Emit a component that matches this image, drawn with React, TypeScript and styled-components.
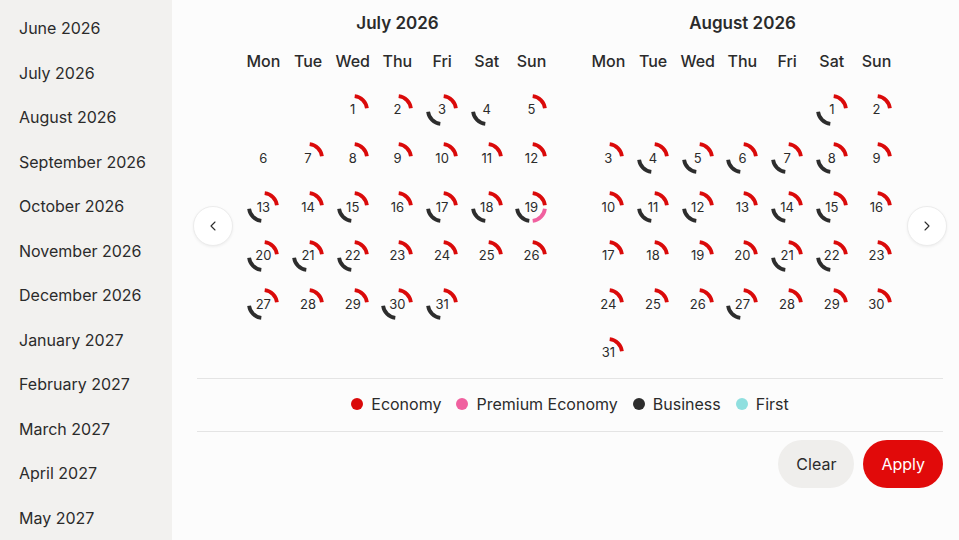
import styled, { createGlobalStyle } from "styled-components";
import { ChevronLeft, ChevronRight } from "lucide-react";

type Cabin = "economy" | "premium" | "business" | "first";

const CABIN_COLORS: Record<Cabin, string> = {
  economy: "#da0a0a",
  premium: "#f0609f",
  business: "#2d2d2d",
  first: "#8fdfdf",
};

// quadrant each cabin sits in, clockwise from 12 o'clock
const QUADRANT: Record<Cabin, number> = {
  economy: 0,
  premium: 1,
  business: 2,
  first: 3,
};

const MONTH_LIST = [
  "June 2026",
  "July 2026",
  "August 2026",
  "September 2026",
  "October 2026",
  "November 2026",
  "December 2026",
  "January 2027",
  "February 2027",
  "March 2027",
  "April 2027",
  "May 2027",
];

const WEEKDAYS = ["Mon", "Tue", "Wed", "Thu", "Fri", "Sat", "Sun"];

type MonthData = {
  title: string;
  offset: number; // blank cells before the 1st
  days: number;
  cabins: Record<number, Cabin[]>;
};

const E: Cabin[] = ["economy"];
const EB: Cabin[] = ["economy", "business"];

function fill(days: number, base: Cabin[], overrides: Record<number, Cabin[]>) {
  const out: Record<number, Cabin[]> = {};
  for (let d = 1; d <= days; d++) out[d] = overrides[d] ?? base;
  return out;
}

const MONTHS: MonthData[] = [
  {
    title: "July 2026",
    offset: 2,
    days: 31,
    cabins: fill(31, E, {
      3: EB,
      4: ["business"],
      6: [],
      13: EB,
      15: EB,
      17: EB,
      18: EB,
      19: ["economy", "premium", "business"],
      20: EB,
      21: EB,
      22: EB,
      27: EB,
      30: EB,
      31: EB,
    }),
  },
  {
    title: "August 2026",
    offset: 5,
    days: 31,
    cabins: fill(31, E, {
      1: EB,
      4: EB,
      5: EB,
      6: EB,
      7: EB,
      8: EB,
      11: EB,
      12: EB,
      14: EB,
      15: EB,
      21: EB,
      22: EB,
      27: EB,
    }),
  },
];

const R = 14;
const C = 17;

function arcPath(q: number) {
  const a0 = ((q * 90 + 7) * Math.PI) / 180;
  const a1 = ((q * 90 + 83) * Math.PI) / 180;
  const x0 = C + R * Math.sin(a0);
  const y0 = C - R * Math.cos(a0);
  const x1 = C + R * Math.sin(a1);
  const y1 = C - R * Math.cos(a1);
  return `M ${x0.toFixed(2)} ${y0.toFixed(2)} A ${R} ${R} 0 0 1 ${x1.toFixed(2)} ${y1.toFixed(2)}`;
}

function Ring({ cabins }: { cabins: Cabin[] }) {
  return (
    <RingSvg width={34} height={34} viewBox="0 0 34 34">
      {cabins.map((c) => (
        <path
          key={c}
          d={arcPath(QUADRANT[c])}
          fill="none"
          stroke={CABIN_COLORS[c]}
          strokeWidth={3.8}
        />
      ))}
    </RingSvg>
  );
}

function Month({ month }: { month: MonthData }) {
  const blanks = Array.from({ length: month.offset });
  const days = Array.from({ length: month.days }, (_, i) => i + 1);
  return (
    <MonthBox>
      <MonthTitle>{month.title}</MonthTitle>
      <Grid>
        {WEEKDAYS.map((w) => (
          <Weekday key={w}>{w}</Weekday>
        ))}
        {blanks.map((_, i) => (
          <Cell key={"b" + i} />
        ))}
        {days.map((d) => (
          <Cell key={d}>
            <Ring cabins={month.cabins[d]} />
            <DayNum>{d}</DayNum>
          </Cell>
        ))}
      </Grid>
    </MonthBox>
  );
}

export default function App() {
  return (
    <>
      <GlobalStyle />
      <Page>
        <Sidebar>
          {MONTH_LIST.map((m) => (
            <SideItem key={m}>{m}</SideItem>
          ))}
        </Sidebar>
        <Main>
          <CalendarRow>
            <NavButton aria-label="Previous month">
              <ChevronLeft size={16} strokeWidth={1.6} />
            </NavButton>
            <Months>
              {MONTHS.map((m) => (
                <Month key={m.title} month={m} />
              ))}
            </Months>
            <NavButton aria-label="Next month">
              <ChevronRight size={16} strokeWidth={1.6} />
            </NavButton>
          </CalendarRow>
          <Divider />
          <Legend>
            <LegendItem>
              <Dot $color={CABIN_COLORS.economy} />
              Economy
            </LegendItem>
            <LegendItem>
              <Dot $color={CABIN_COLORS.premium} />
              Premium Economy
            </LegendItem>
            <LegendItem>
              <Dot $color={CABIN_COLORS.business} />
              Business
            </LegendItem>
            <LegendItem>
              <Dot $color={CABIN_COLORS.first} />
              First
            </LegendItem>
          </Legend>
          <Divider />
          <Actions>
            <Button>Clear</Button>
            <Button $primary>Apply</Button>
          </Actions>
        </Main>
      </Page>
    </>
  );
}

const GlobalStyle = createGlobalStyle`
  body {
    margin: 0;
    font-family: Inter, "Liberation Sans", sans-serif;
    color: #2b2b2b;
    background: #fcfcfc;
  }
`;

const Page = styled.div`
  display: flex;
  height: 540px;
  overflow: hidden;
`;

const Sidebar = styled.div`
  width: 172px;
  flex-shrink: 0;
  background: #f2f1ef;
  padding: 6px 0 0 19px;
  box-sizing: border-box;
`;

const SideItem = styled.div`
  height: 44.5px;
  line-height: 44.5px;
  font-size: 16px;
  color: #2b2b2b;
  white-space: nowrap;
`;

const Main = styled.div`
  flex: 1;
  background: #fcfcfc;
  padding: 0 16px 0 25px;
  display: flex;
  flex-direction: column;
`;

const CalendarRow = styled.div`
  display: flex;
  align-items: flex-start;
  margin: 0 -4px;
  height: 378px;
`;

const Divider = styled.div`
  height: 1px;
  background: #e4e4e4;
`;

const NavButton = styled.button`
  width: 40px;
  height: 40px;
  flex-shrink: 0;
  margin-top: 206px;
  border-radius: 50%;
  border: 1px solid #ececec;
  background: #fff;
  box-shadow: 0 1px 3px rgba(0, 0, 0, 0.06);
  color: #2b2b2b;
  display: flex;
  align-items: center;
  justify-content: center;
  padding: 0;
  cursor: pointer;
`;

const Months = styled.div`
  flex: 1;
  display: flex;
  justify-content: center;
  gap: 32px;
`;

const MonthBox = styled.div`
  width: 313px;
`;

const MonthTitle = styled.div`
  padding-top: 9px;
  height: 28px;
  line-height: 28px;
  text-align: center;
  font-size: 17px;
  font-weight: 600;
`;

const Grid = styled.div`
  display: grid;
  grid-template-columns: repeat(7, 44.7px);
  grid-auto-rows: 48.6px;
`;

const Weekday = styled.div`
  display: flex;
  align-items: center;
  justify-content: center;
  font-size: 16px;
  font-weight: 500;
`;

const Cell = styled.div`
  position: relative;
  display: flex;
  align-items: center;
  justify-content: center;
`;

const RingSvg = styled.svg`
  position: absolute;
  left: 50%;
  top: 50%;
  transform: translate(-50%, -50%);
`;

const DayNum = styled.span`
  position: relative;
  font-size: 13px;
  line-height: 1;
  color: #2b2b2b;
`;

const Legend = styled.div`
  display: flex;
  justify-content: center;
  gap: 15px;
  padding: 13px 0 15px;
  line-height: 24px;
  font-size: 16px;
`;

const LegendItem = styled.div`
  display: flex;
  align-items: center;
  gap: 8px;
`;

const Dot = styled.span<{ $color: string }>`
  width: 12px;
  height: 12px;
  border-radius: 50%;
  background: ${(p) => p.$color};
`;

const Actions = styled.div`
  display: flex;
  justify-content: flex-end;
  gap: 9px;
  padding-top: 8px;
`;

const Button = styled.button<{ $primary?: boolean }>`
  height: 48px;
  padding: 0 18px;
  border-radius: 24px;
  border: none;
  font-family: inherit;
  font-size: 16px;
  cursor: pointer;
  background: ${(p) => (p.$primary ? "#e10a0a" : "#efeeec")};
  color: ${(p) => (p.$primary ? "#fff" : "#2b2b2b")};
`;
